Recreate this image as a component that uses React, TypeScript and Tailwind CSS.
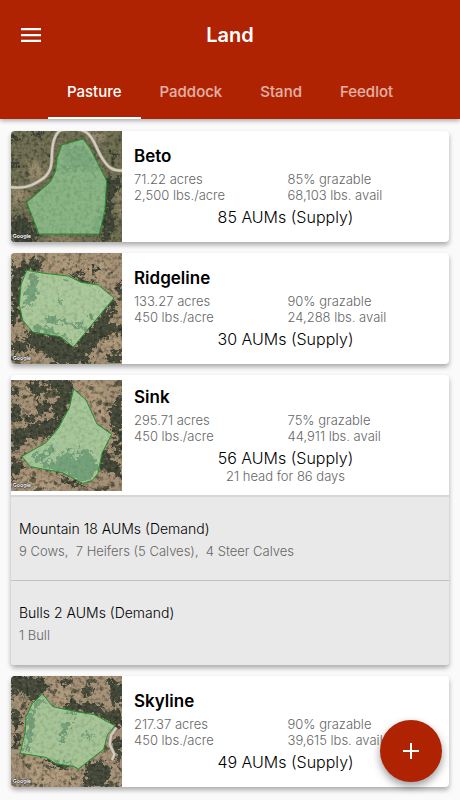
import { useState } from "react";

type Terrain = {
  ground: string;
  pasture: string;
  trees: string[];
  density: number;
  boundary: string;
  patches: string[];
  road?: string;
  bare: string[];
};

type Herd = {
  name: string;
  aums: number;
  animals: string;
};

type Land = {
  name: string;
  acres: string;
  perAcre: string;
  grazable: string;
  available: string;
  aums: number;
  duration?: string;
  herds?: Herd[];
  terrain: Terrain;
};

const tabs = ["Pasture", "Paddock", "Stand", "Feedlot"];

const lands: Land[] = [
  {
    name: "Beto",
    acres: "71.22",
    perAcre: "2,500",
    grazable: "85%",
    available: "68,103",
    aums: 85,
    terrain: {
      ground: "#6f6e52",
      pasture: "#8ab787",
      density: -8.3,
      boundary: "M152 42L217 24L238 54L287 149L282 235L265 309H84L47 214L118 153L134 120L138 82Z",
      road: "M-5 168Q35 174 62 162C98 145 120 130 122 90C123 55 124 20 145 0C170 -12 208 -8 226 4C252 22 256 58 278 88C294 112 306 120 340 119",
      trees: [
        "M285 145L300 138L333 145V165L312 178L305 220L310 280L290 333H268L280 270Z",
        "M60 0H95L85 25L70 20Z",
        "M0 270L20 248L55 275L84 310L80 333H0Z",
        "M0 90L20 92L25 104L0 108Z",
        "M2 10L22 18L18 32L0 30Z",
        "M300 60L325 65L318 85L302 78Z",
      ],
      bare: [
        "M45 100L75 88L98 110L95 140L60 150Z",
        "M225 5L290 0L270 35L245 30Z",
        "M100 318L190 318L210 333H100Z",
        "M316 170H333V260L320 250Z",
        "M0 170L60 178L40 210L0 225Z",
      ],
      patches: [
        "M152 48L190 42L230 60L262 115L235 130L205 105L180 120L158 75Z",
        "M140 95L170 108L165 125L140 122Z",
        "M262 240L276 225L270 300L250 308Z",
      ],
    },
  },
  {
    name: "Ridgeline",
    acres: "133.27",
    perAcre: "450",
    grazable: "90%",
    available: "24,288",
    aums: 30,
    terrain: {
      ground: "#a59175",
      pasture: "#abcb9d",
      density: -8,
      boundary: "M47 52L100 61L172 69L210 88L262 96L309 135L187 282L148 251L105 244L65 237L35 202L25 155L30 95Z",
      trees: [
        "M0 30L25 42L60 15L85 20L90 58L47 52L28 100L25 160L35 200L0 215Z",
        "M165 60L205 70L245 86L262 96L212 92Z",
        "M60 237L150 251L187 282L309 138L318 165L292 205L333 215V238L270 260L230 305L240 333H130L100 300L60 280L35 250Z",
        "M315 95L333 85V125L318 120Z",
        "M238 50L252 38L262 52L245 60Z",
        "M0 265L45 262L55 290L20 300L0 320Z",
        "M285 305L333 290V333H295Z",
        "M190 55L213 50L215 62L196 65Z",
      ],
      bare: ["M100 0L180 10L220 40L290 20L300 75L270 85L210 45L120 50Z", "M245 270L333 230V280L290 295Z"],
      patches: [
        "M48 60L82 62L80 100L70 150L42 165L45 110L55 85Z",
        "M68 218L110 222L148 240L190 275L180 270L145 250L105 243L65 235Z",
        "M100 190L150 198L190 210L225 215L232 232L200 226L160 212L110 206Z",
        "M135 138L152 130L155 142L138 147Z",
        "M225 190L245 185L255 195L240 203Z",
        "M160 68L176 75L170 90L158 84Z",
      ],
    },
  },
  {
    name: "Sink",
    acres: "295.71",
    perAcre: "450",
    grazable: "75%",
    available: "44,911",
    aums: 56,
    duration: "21 head for 86 days",
    herds: [
      { name: "Mountain", aums: 18, animals: "9 Cows,  7 Heifers (5 Calves),  4 Steer Calves" },
      { name: "Bulls", aums: 2, animals: "1 Bull" },
    ],
    terrain: {
      ground: "#a59076",
      pasture: "#a7c99c",
      density: -7.2,
      boundary: "M188 27L225 60L258 132L302 163L273 220L261 280L243 302L215 310L155 278L58 260L33 229L105 188L140 148L175 83Z",
      trees: [
        "M110 0H180L188 30L170 85L140 130L122 90L140 50Z",
        "M0 155L60 140L100 118L145 120L140 148L105 175L70 172L0 215Z",
        "M40 10L80 5L100 35L75 55L60 30Z",
        "M75 70L120 60L115 95L80 100Z",
        "M0 75L35 85L30 120L0 130Z",
        "M95 5L115 12L110 40L92 30Z",
        "M45 105L75 112L65 130L40 125Z",
        "M300 80L333 40V215L312 230L304 190L320 165L298 140Z",
        "M272 225L285 200L300 235L333 270V300L292 275L265 270Z",
        "M0 240L25 235L40 265L15 280L0 310Z",
        "M135 280L190 305L225 320L180 318Z",
        "M0 20L20 25L15 50L0 50Z",
      ],
      bare: ["M190 0L275 12L295 130L265 125L225 50Z", "M50 280L130 290L160 333H30L20 300Z", "M30 30L65 15L70 50L50 62Z"],
      patches: [
        "M60 230L120 200L135 215L80 250Z",
        "M85 250L125 245L150 225L165 208L185 218L180 228L215 232L190 208L240 212L245 230L262 245L258 280L240 300L215 308L155 276L100 266Z",
      ],
    },
  },
  {
    name: "Skyline",
    acres: "217.37",
    perAcre: "450",
    grazable: "90%",
    available: "39,615",
    aums: 49,
    terrain: {
      ground: "#a69278",
      pasture: "#a7c799",
      density: -7.7,
      boundary: "M94 53L125 92L195 107L250 116L312 149L290 175L278 220L202 279L186 271L135 263L105 244L28 232L43 165L45 122L64 83Z",
      trees: [
        "M0 0H85L120 35L95 52L62 83L42 55L20 45L0 85Z",
        "M155 102L180 70L215 82L240 78L275 100L333 105V160L250 114Z",
        "M208 40L235 25L245 55L220 60Z",
        "M285 10L333 20V85L305 80Z",
        "M228 265L275 250L300 275L285 333H220Z",
        "M105 246L180 272L160 280L110 265Z",
        "M300 190L333 180V245L315 265Z",
        "M0 85L25 115L30 150L15 160L0 130Z",
        "M10 170L30 180L20 225L5 215Z",
        "M140 10L178 0L190 20L150 35Z",
      ],
      road: "M316 155L300 178L296 205L310 235L303 252",
      bare: ["M120 40L180 20L220 65L180 75L145 90Z", "M35 245L105 250L180 290L210 333H60Z"],
      patches: [
        "M92 58L104 70L75 105L65 165L55 225L42 230L45 165L48 115L70 80Z",
        "M155 142L188 132L182 150L168 160L160 205L145 212L152 170Z",
        "M218 160L240 185L232 190L220 178Z",
        "M150 240L195 225L160 238Z",
        "M108 246L155 255L195 268L185 272L135 262Z",
        "M155 106L195 108L185 116L165 112Z",
      ],
    },
  },
];

function MapThumb({ id, name, terrain }: { id: number; name: string; terrain: Terrain }) {
  return (
    <svg
      viewBox="0 0 333 333"
      className="block size-[111px] shrink-0"
      role="img"
      aria-label={`${name} map`}
      colorInterpolationFilters="sRGB"
    >
      <defs>
        {/* fine brightness noise of the ground */}
        <filter id={`grain${id}`} x="0" y="0" width="100%" height="100%">
          <feTurbulence type="fractalNoise" baseFrequency="0.09" numOctaves="3" seed={id + 3} />
          <feColorMatrix values="0 0 0 0 0.08  0 0 0 0 0.09  0 0 0 0 0.06  2 0 0 0 -0.9" />
        </filter>
        <filter id={`light${id}`} x="0" y="0" width="100%" height="100%">
          <feTurbulence type="fractalNoise" baseFrequency="0.12" numOctaves="2" seed={id + 23} />
          <feColorMatrix values="0 0 0 0 0.78  0 0 0 0 0.72  0 0 0 0 0.6  3 0 0 0 -1.5" />
        </filter>
        {/* scattered shrubs */}
        <filter id={`shrub${id}`} x="0" y="0" width="100%" height="100%">
          <feTurbulence type="fractalNoise" baseFrequency="0.035" numOctaves="4" seed={id + 11} />
          <feColorMatrix values={`0 0 0 0 0.22  0 0 0 0 0.25  0 0 0 0 0.18  0 12 0 0 ${terrain.density}`} />
        </filter>
        <filter id={`rough${id}`} x="-10%" y="-10%" width="120%" height="120%">
          <feTurbulence type="fractalNoise" baseFrequency="0.07" numOctaves="3" seed={id + 5} />
          <feDisplacementMap in="SourceGraphic" scale="45" xChannelSelector="R" yChannelSelector="G" />
        </filter>
        <filter id={`soft${id}`} x="-20%" y="-20%" width="140%" height="140%">
          <feGaussianBlur stdDeviation="9" />
        </filter>
        <clipPath id={`clip${id}`}>
          <path d={terrain.boundary} />
        </clipPath>
      </defs>
      <rect width="333" height="333" fill={terrain.ground} />
      <g fill="#b8a283" opacity="0.6" filter={`url(#soft${id})`}>
        {terrain.bare.map((d) => <path key={d} d={d} />)}
      </g>
      <rect width="333" height="333" filter={`url(#shrub${id})`} opacity="0.7" />
      <g fill="#384033" opacity="0.88" filter={`url(#rough${id})`}>
        {terrain.trees.map((d) => <path key={d} d={d} />)}
      </g>
      <rect width="333" height="333" filter={`url(#grain${id})`} opacity="0.6" />
      <rect width="333" height="333" filter={`url(#light${id})`} opacity="0.22" />
      {terrain.road && (
        <>
          <path d={terrain.road} fill="none" stroke="#968d78" strokeWidth="11" />
          <path d={terrain.road} fill="none" stroke="#d2cdc0" strokeWidth="7" />
        </>
      )}
      <path d={terrain.boundary} fill={terrain.pasture} fillOpacity="0.95" />
      <g clipPath={`url(#clip${id})`}>
        <g fill="#669670" opacity={id === 0 ? 0.35 : 0.75} filter={`url(#rough${id})`}>
          {terrain.patches.map((d) => <path key={d} d={d} />)}
        </g>
        <rect width="333" height="333" filter={`url(#grain${id})`} opacity="0.15" />
      </g>
      <path d={terrain.boundary} fill="none" stroke="#21902e" strokeWidth="3" strokeLinejoin="round" />
      <text
        x="5"
        y="322"
        fill="#fff"
        stroke="#333"
        strokeWidth="3"
        paintOrder="stroke"
        fontSize="16"
        fontWeight="600"
        fontFamily="Inter, sans-serif"
      >
        Google
      </text>
    </svg>
  );
}

function LandCard({ land, id }: { land: Land; id: number }) {
  return (
    <article className="overflow-hidden rounded bg-white shadow-[0_3px_5px_rgba(0,0,0,0.32)]">
      <div className={land.herds ? "flex items-center pt-[5px] pb-1" : "flex items-center"}>
        <MapThumb id={id} name={land.name} terrain={land.terrain} />
        <div className="min-w-0 flex-1 pb-0.5">
          <div className="pr-2 pl-3">
            <h2 className="text-[17px] leading-6 font-semibold text-black">{land.name}</h2>
            <div className="mt-[3px] grid grid-cols-2 text-[13px] leading-4 font-light text-[#666]">
              <span>{land.acres} acres</span>
              <span>{land.grazable} grazable</span>
              <span>{land.perAcre} lbs./acre</span>
              <span>{land.available} lbs. avail</span>
            </div>
          </div>
          <p className="mt-1 text-center text-[16px] leading-5 font-light text-black">{land.aums} AUMs (Supply)</p>
          {land.duration && (
            <p className="text-center text-[13px] leading-4 font-light text-[#666]">{land.duration}</p>
          )}
        </div>
      </div>
      {land.herds && (
        <ul className="border-t-2 border-[#d6d6d6] bg-[#e9e9e9]">
          {land.herds.map((herd) => (
            <li
              key={herd.name}
              className="flex h-[84px] flex-col justify-center gap-1 border-[#c2c2c2] px-2 not-last:border-b"
            >
              <p className="text-[14px] leading-5 font-light text-black">
                {herd.name} {herd.aums} AUMs (Demand)
              </p>
              <p className="text-[13px] leading-4 font-light whitespace-pre-wrap text-[#666]">{herd.animals}</p>
            </li>
          ))}
        </ul>
      )}
    </article>
  );
}

export default function App() {
  const [active, setActive] = useState("Pasture");

  return (
    <div className="min-h-screen bg-[#fafafa] font-[Inter,'Liberation_Sans',sans-serif]">
      <header className="bg-[#b02302] text-white shadow-[0_2px_4px_rgba(0,0,0,0.3)]">
        <div className="grid h-[70px] grid-cols-[1fr_auto_1fr] items-center px-5">
          <button type="button" aria-label="Open menu" className="w-fit">
            <svg viewBox="0 0 22 14" className="block h-[14px] w-[22px]" fill="currentColor">
              <path d="M1 0h20v2.3H1zM1 5.9h20v2.3H1zM1 11.7h20V14H1z" />
            </svg>
          </button>
          <h1 className="text-[20px] leading-7 font-semibold">Land</h1>
        </div>
        <nav role="tablist" className="flex h-[49px] justify-center">
          {tabs.map((tab) => (
            <button
              key={tab}
              type="button"
              role="tab"
              aria-selected={tab === active}
              onClick={() => setActive(tab)}
              className={
                tab === active
                  ? "border-b-2 border-white px-[19px] pb-0.5 text-[15px] font-medium text-white"
                  : "border-b-2 border-transparent px-[19px] pb-0.5 text-[15px] font-medium text-white/65"
              }
            >
              {tab}
            </button>
          ))}
        </nav>
      </header>

      <main className="flex flex-col gap-[11px] px-[11px] pt-3 pb-[13px]">
        {lands.map((land, i) => (
          <LandCard key={land.name} land={land} id={i} />
        ))}
      </main>

      <button
        type="button"
        aria-label="Add pasture"
        className="fixed right-[18px] bottom-[18px] flex size-[62px] items-center justify-center rounded-full bg-[#b02302] text-white shadow-[0_4px_8px_rgba(0,0,0,0.4)]"
      >
        <svg viewBox="0 0 16 16" className="size-4" fill="currentColor">
          <path d="M7 0h2v7h7v2H9v7H7V9H0V7h7z" />
        </svg>
      </button>
    </div>
  );
}
